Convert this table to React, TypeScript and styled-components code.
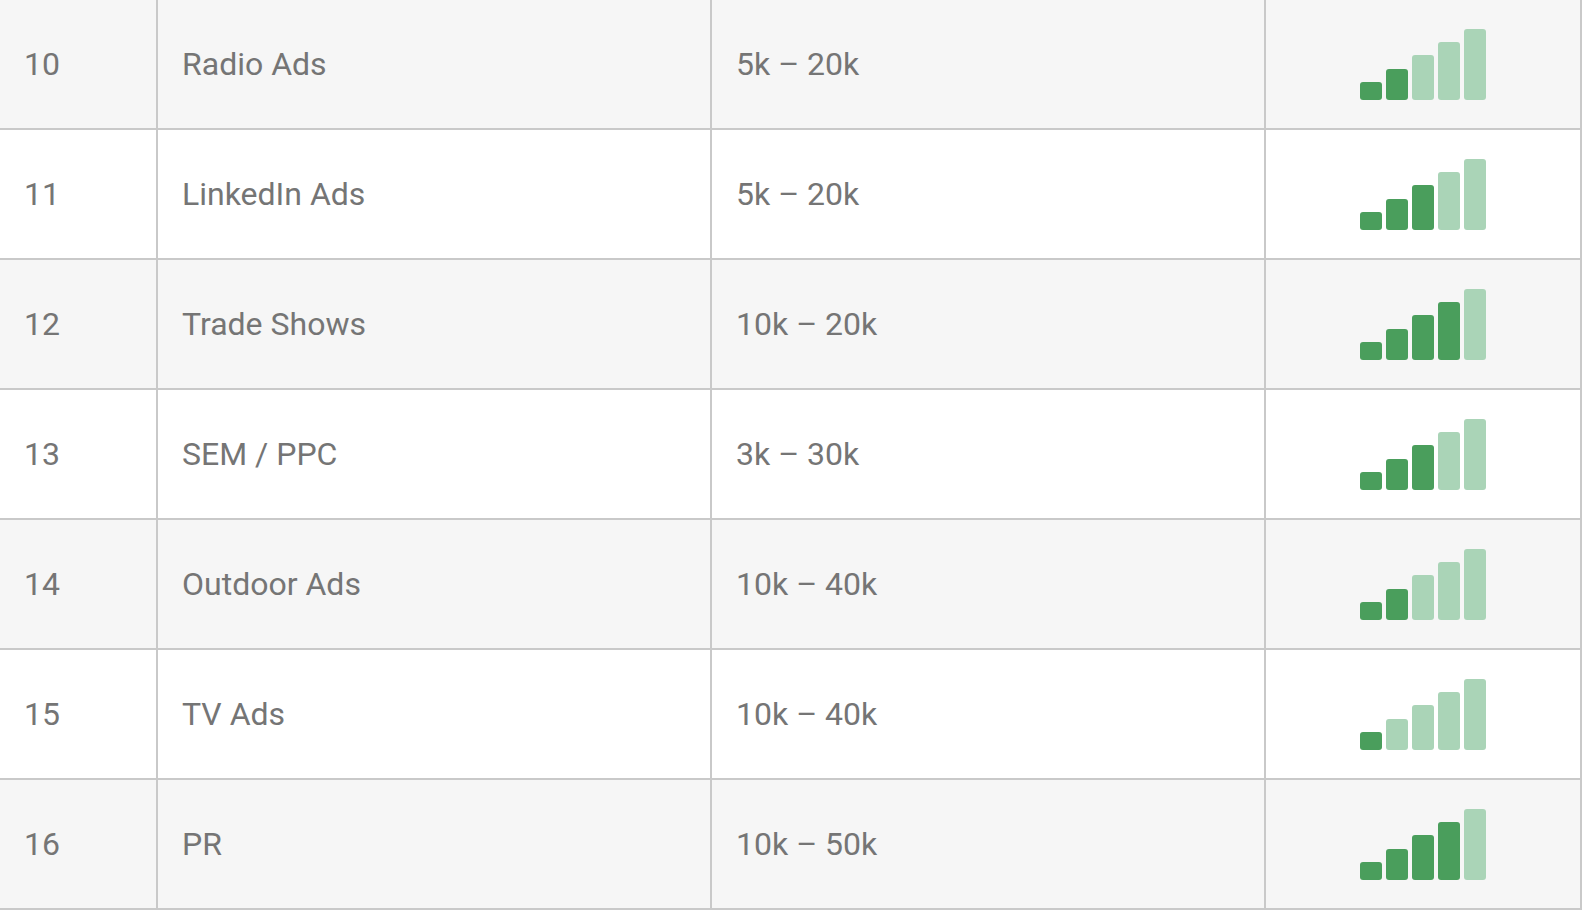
import React from "react";
import styled, { createGlobalStyle } from "styled-components";

const Global = createGlobalStyle`
  html, body { margin: 0; padding: 0; background: #ffffff; }
  body { font-family: Roboto, "Liberation Sans", sans-serif; }
  * { box-sizing: border-box; }
`;

const Table = styled.div`
  width: 1582px;
  display: flex;
  flex-direction: column;
`;

const Row = styled.div<{ $alt: boolean }>`
  display: grid;
  grid-template-columns: 158px 554px 554px 316px;
  height: 130px;
  background: ${(p) => (p.$alt ? "#f6f6f6" : "#ffffff")};
  border-bottom: 2px solid #c9c9c9;
`;

const Cell = styled.div`
  display: flex;
  align-items: center;
  padding-left: 24px;
  border-right: 2px solid #c9c9c9;
  font-size: 32px;
  color: #757575;
  white-space: nowrap;
`;

const BarCell = styled.div`
  display: flex;
  align-items: center;
  justify-content: center;
  border-right: 2px solid #c9c9c9;
`;

const Bars = styled.div`
  display: flex;
  align-items: flex-end;
  gap: 4px;
  height: 71px;
`;

const Bar = styled.div<{ $on: boolean; $h: number }>`
  width: 22px;
  height: ${(p) => p.$h}px;
  border-radius: 3px;
  background: ${(p) => (p.$on ? "#4a9e5c" : "#aad4b7")};
`;

const rows = [
  { n: 10, name: "Radio Ads", range: "5k – 20k", level: 2 },
  { n: 11, name: "LinkedIn Ads", range: "5k – 20k", level: 3 },
  { n: 12, name: "Trade Shows", range: "10k – 20k", level: 4 },
  { n: 13, name: "SEM / PPC", range: "3k – 30k", level: 3 },
  { n: 14, name: "Outdoor Ads", range: "10k – 40k", level: 2 },
  { n: 15, name: "TV Ads", range: "10k – 40k", level: 1 },
  { n: 16, name: "PR", range: "10k – 50k", level: 4 },
];

const heights = [18, 31, 45, 58, 71];

export default function App() {
  return (
    <>
      <Global />
      <Table>
        {rows.map((r, i) => (
          <Row key={r.n} $alt={i % 2 === 0}>
            <Cell>{r.n}</Cell>
            <Cell>{r.name}</Cell>
            <Cell>{r.range}</Cell>
            <BarCell>
              <Bars>
                {heights.map((h, j) => (
                  <Bar key={j} $h={h} $on={j < r.level} />
                ))}
              </Bars>
            </BarCell>
          </Row>
        ))}
      </Table>
    </>
  );
}
